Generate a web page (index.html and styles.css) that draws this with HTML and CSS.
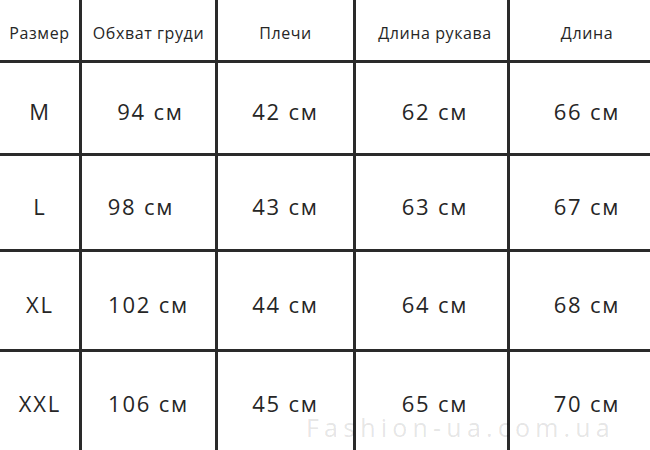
FILE: index.html
```html
<!DOCTYPE html>
<html lang="ru">
<head>
<meta charset="utf-8">
<title>Размеры</title>
<link rel="stylesheet" href="styles.css">
</head>
<body>
<div class="page">
  <div class="grid">
    <div class="cell head c1">Размер</div>
    <div class="cell head c2">Обхват груди</div>
    <div class="cell head c3">Плечи</div>
    <div class="cell head c4">Длина рукава</div>
    <div class="cell head c5">Длина</div>

    <div class="cell val c1">M</div>
    <div class="cell val c2 shift-r">94 см</div>
    <div class="cell val c3">42 см</div>
    <div class="cell val c4">62 см</div>
    <div class="cell val c5">66 см</div>

    <div class="cell val c1">L</div>
    <div class="cell val c2 shift-l">98 см</div>
    <div class="cell val c3">43 см</div>
    <div class="cell val c4">63 см</div>
    <div class="cell val c5">67 см</div>

    <div class="cell val c1">XL</div>
    <div class="cell val c2">102 см</div>
    <div class="cell val c3">44 см</div>
    <div class="cell val c4">64 см</div>
    <div class="cell val c5">68 см</div>

    <div class="cell val c1 last">XXL</div>
    <div class="cell val c2 last">106 см</div>
    <div class="cell val c3 last">45 см</div>
    <div class="cell val c4 last">65 см</div>
    <div class="cell val c5 last">70 см</div>
  </div>
  <div class="watermark">Fashion-ua.com.ua</div>
</div>
</body>
</html>
```

FILE: styles.css
```css
html, body {
  margin: 0;
  padding: 0;
  background: #ffffff;
}

.page {
  position: relative;
  width: 650px;
  height: 450px;
  overflow: hidden;
  font-family: "Open Sans", "DejaVu Sans", sans-serif;
  color: #262626;
}

.grid {
  display: grid;
  grid-template-columns: 82px 136px 138px 154px 140px;
  grid-template-rows: 63px 93px 96px 100px 98px;
}

.cell {
  box-sizing: border-box;
  display: flex;
  align-items: center;
  justify-content: center;
  border-bottom: 3px solid #2a2a2a;
  border-right: 3px solid #2a2a2a;
  white-space: nowrap;
}

.cell.c5 {
  border-right: none;
  padding-left: 14px;
}

.cell.c4 {
  padding-left: 7px;
}

.cell.last {
  border-bottom: none;
}

.head {
  font-size: 16px;
  padding-top: 6px;
  letter-spacing: 0.6px;
}

.val {
  font-size: 22px;
  line-height: 22px;
  letter-spacing: 1.8px;
  padding-top: 6px;
}

.val.c1 {
  padding-left: 1px;
}

.val.last {
  padding-top: 4px;
}

.shift-r {
  padding-left: 4px;
}

.shift-l {
  padding-right: 15px;
}

.watermark {
  position: absolute;
  left: 306px;
  top: 418px;
  font-family: "Open Sans", "Liberation Sans", sans-serif;
  font-size: 25px;
  font-weight: 400;
  line-height: 18px;
  letter-spacing: 5.2px;
  color: rgba(0, 0, 0, 0.11);
  pointer-events: none;
}
```
